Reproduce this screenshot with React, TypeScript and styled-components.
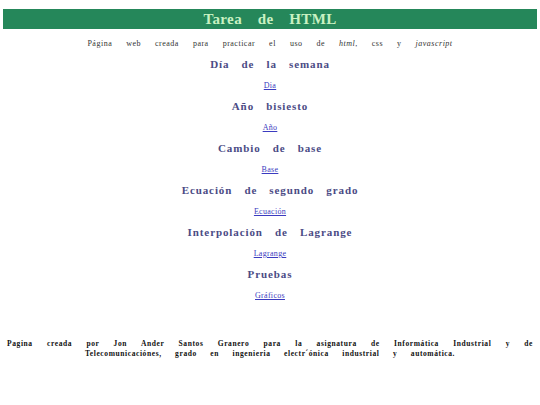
import React from 'react';
import styled, { createGlobalStyle } from 'styled-components';

const GlobalStyle = createGlobalStyle`
  html, body {
    margin: 0;
    padding: 0;
    background: #ffffff;
  }
  body {
    font-family: "Liberation Serif", "Times New Roman", serif;
  }
`;

const Page = styled.main`
  width: 540px;
  padding: 9px 3px 0;
  box-sizing: border-box;
`;

const Header = styled.header`
  background: #25875a;
  height: 20px;
  display: flex;
  align-items: center;
  justify-content: center;

  h1 {
    margin: 0;
    font-size: 15px;
    font-weight: bold;
    color: #c9f2c2;
    letter-spacing: 0.4px;
    word-spacing: 11.5px;
  }
`;

const Intro = styled.p`
  margin: 10px 0 0;
  text-align: center;
  font-size: 8px;
  color: #333;
  letter-spacing: 0.5px;
  word-spacing: 11.5px;
  line-height: 10px;
`;

const Sections = styled.section`
  display: flex;
  flex-direction: column;
  align-items: center;
  margin-top: 7px;
`;

const Topic = styled.div`
  display: flex;
  flex-direction: column;
  align-items: center;
  height: 42px;
`;

const TopicTitle = styled.h2`
  margin: 0;
  font-size: 11px;
  line-height: 16px;
  font-weight: bold;
  color: #4b4b85;
  letter-spacing: 0.9px;
  word-spacing: 8.5px;
`;

const TopicLink = styled.a`
  margin-top: 8px;
  font-size: 8px;
  line-height: 12px;
  letter-spacing: 0.3px;
  color: #3b3bc0;
  text-decoration: underline;
`;

const Footer = styled.footer`
  margin-top: 31px;
  padding: 0 4px;
  font-size: 7.5px;
  font-weight: bold;
  line-height: 10px;
  color: #111;
  letter-spacing: 0.6px;
`;

const FooterLine = styled.p<{ $justify?: boolean }>`
  margin: 0;
  white-space: nowrap;
  word-spacing: ${(p) => (p.$justify ? '2px' : '11px')};
  text-align: ${(p) => (p.$justify ? 'justify' : 'center')};
  text-align-last: ${(p) => (p.$justify ? 'justify' : 'center')};
`;

const topics = [
  { title: 'Día de la semana', link: 'Dia' },
  { title: 'Año bisiesto', link: 'Año' },
  { title: 'Cambio de base', link: 'Base' },
  { title: 'Ecuación de segundo grado', link: 'Ecuación' },
  { title: 'Interpolación de Lagrange', link: 'Lagrange' },
  { title: 'Pruebas', link: 'Gráficos' },
];

export default function App() {
  return (
    <Page>
      <GlobalStyle />
      <Header>
        <h1>Tarea de HTML</h1>
      </Header>
      <Intro>
        Página web creada para practicar el uso de <em>html</em>, css y <em>javascript</em>
      </Intro>
      <Sections>
        {topics.map((t) => (
          <Topic key={t.title}>
            <TopicTitle>{t.title}</TopicTitle>
            <TopicLink href="#">{t.link}</TopicLink>
          </Topic>
        ))}
      </Sections>
      <Footer>
        <FooterLine $justify>
          Pagina creada por Jon Ander Santos Granero para la asignatura de Informática Industrial y de
        </FooterLine>
        <FooterLine>
          Telecomunicaciónes, grado en ingenieria electr´ónica industrial y automática.
        </FooterLine>
      </Footer>
    </Page>
  );
}
